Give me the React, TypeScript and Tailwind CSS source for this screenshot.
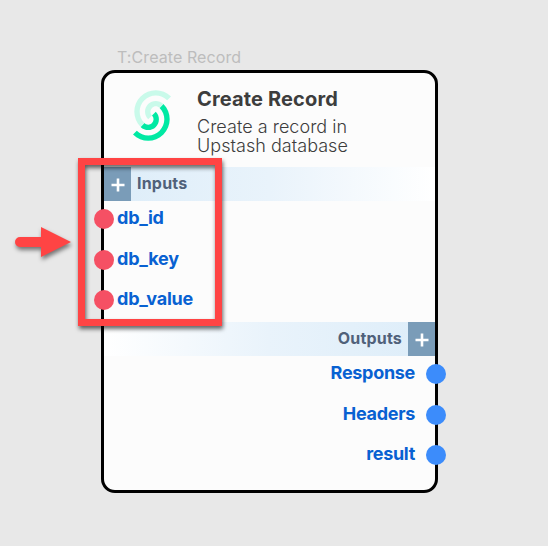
import type { ReactNode } from "react";

function UpstashLogo() {
  return (
    <svg className="h-[51px] w-[38px]" viewBox="0 0 256 341" aria-hidden="true">
      <g fill="#00e9a3">
        <path d="M0 298.417c56.554 56.553 148.247 56.553 204.801 0 56.554-56.554 56.554-148.247 0-204.801l-25.6 25.6c42.415 42.416 42.415 111.185 0 153.6-42.416 42.416-111.185 42.416-153.601 0L0 298.416z" />
        <path d="M51.2 247.216c28.277 28.277 74.123 28.277 102.4 0 28.277-28.276 28.277-74.123 0-102.4l-25.6 25.6c14.14 14.138 14.14 37.061 0 51.2-14.138 14.139-37.061 14.139-51.2 0l-25.6 25.6z" />
      </g>
      <g fill="#c9faea">
        <path d="M256 42.415c-56.554-56.553-148.247-56.553-204.8 0-56.555 56.555-56.555 148.247 0 204.801l25.599-25.6c-42.415-42.415-42.415-111.185 0-153.6 42.416-42.416 111.185-42.416 153.6 0L256 42.416z" />
        <path d="M204.8 93.616c-28.276-28.277-74.124-28.277-102.4 0-28.278 28.277-28.278 74.123 0 102.4l25.6-25.6c-14.14-14.138-14.14-37.061 0-51.2 14.138-14.139 37.06-14.139 51.2 0l25.6-25.6z" />
      </g>
    </svg>
  );
}

function AddButton() {
  return (
    <button className="flex h-full w-[27px] items-center justify-center bg-[#7a9cb8] pt-[2px]" aria-label="Add">
      <svg className="h-[14px] w-[14px]" viewBox="0 0 14 14" stroke="#fff" strokeWidth="2.6">
        <path d="M7 0.5v13M0.5 7h13" />
      </svg>
    </button>
  );
}

function InputPort({ children }: { children: ReactNode }) {
  return (
    <li className="-ml-[10px] flex h-[40.6px] items-center">
      <span className="h-5 w-5 rounded-full bg-[#f55064]" />
      <span className="-mt-[2px] ml-[3px] text-[18px] leading-6 font-bold tracking-[-0.2px]">{children}</span>
    </li>
  );
}

function OutputPort({ children }: { children: ReactNode }) {
  return (
    <li className="-mr-[11px] flex h-[40.6px] items-center justify-end">
      <span className="-mt-[2px] mr-[11px] text-[18px] leading-6 font-bold tracking-[-0.3px]">{children}</span>
      <span className="h-5 w-5 rounded-full bg-[#3c8cfb]" />
    </li>
  );
}

export default function App() {
  return (
    <main className="relative h-[546px] w-[548px] overflow-hidden bg-[#e8e8e8] pt-[48px] pl-[101px] font-['Inter',sans-serif]">
      <p className="h-[22px] pl-4 text-[16px] leading-[19px] tracking-[0.08px] text-[#bdbdbd]">T:Create Record</p>
      <section className="flex h-[423px] w-[337px] flex-col rounded-[14px] border-[3px] border-black bg-[#fcfcfc]">
        <header className="flex h-[94px] shrink-0 pt-[17px] pl-[29px]">
          <UpstashLogo />
          <div className="-mt-[3px] ml-[26px] text-[#3d3d3d]">
            <h1 className="text-[20px] leading-6 font-bold tracking-[0.15px]">Create Record</h1>
            <p className="mt-[6px] text-[18px] leading-[19px] font-light tracking-[0.03px]">
              Create a record in
              <br />
              Upstash database
            </p>
          </div>
        </header>
        <div className="flex h-[34px] shrink-0 bg-linear-to-r from-[#ddedf9] via-[#e9f3fb] to-white">
          <AddButton />
          <h2 className="ml-[6px] text-[16px] leading-[33px] font-bold tracking-[0.2px] text-[#50617a]">Inputs</h2>
        </div>
        <ul className="-mt-[2px] mb-[2px] h-[121px] shrink-0 text-[#0861d2]">
          <InputPort>db_id</InputPort>
          <InputPort>db_key</InputPort>
          <InputPort>db_value</InputPort>
        </ul>
        <div className="flex h-[34px] shrink-0 justify-end bg-linear-to-l from-[#ddedf9] via-[#e9f3fb] to-white">
          <h2 className="mr-[6px] text-[16px] leading-[33px] font-bold tracking-[0.2px] text-[#50617a]">Outputs</h2>
          <AddButton />
        </div>
        <ul className="-mt-[2px] text-[#0861d2]">
          <OutputPort>Response</OutputPort>
          <OutputPort>Headers</OutputPort>
          <OutputPort>result</OutputPort>
        </ul>
      </section>
      <div className="absolute top-[158px] left-[78px] h-[168px] w-[144px] border-[7px] border-[#ff4444] drop-shadow-[1px_3px_2px_rgba(0,0,0,0.6)]" />
      <svg
        className="absolute top-[226px] left-[14px] h-[32px] w-[58px] drop-shadow-[1px_3px_2px_rgba(0,0,0,0.5)]"
        viewBox="0 0 58 32"
        fill="#ff4444"
      >
        <path d="M6 11H27V1L57 16L27 31V21H6A5 5 0 0 1 6 11Z" />
      </svg>
    </main>
  );
}
